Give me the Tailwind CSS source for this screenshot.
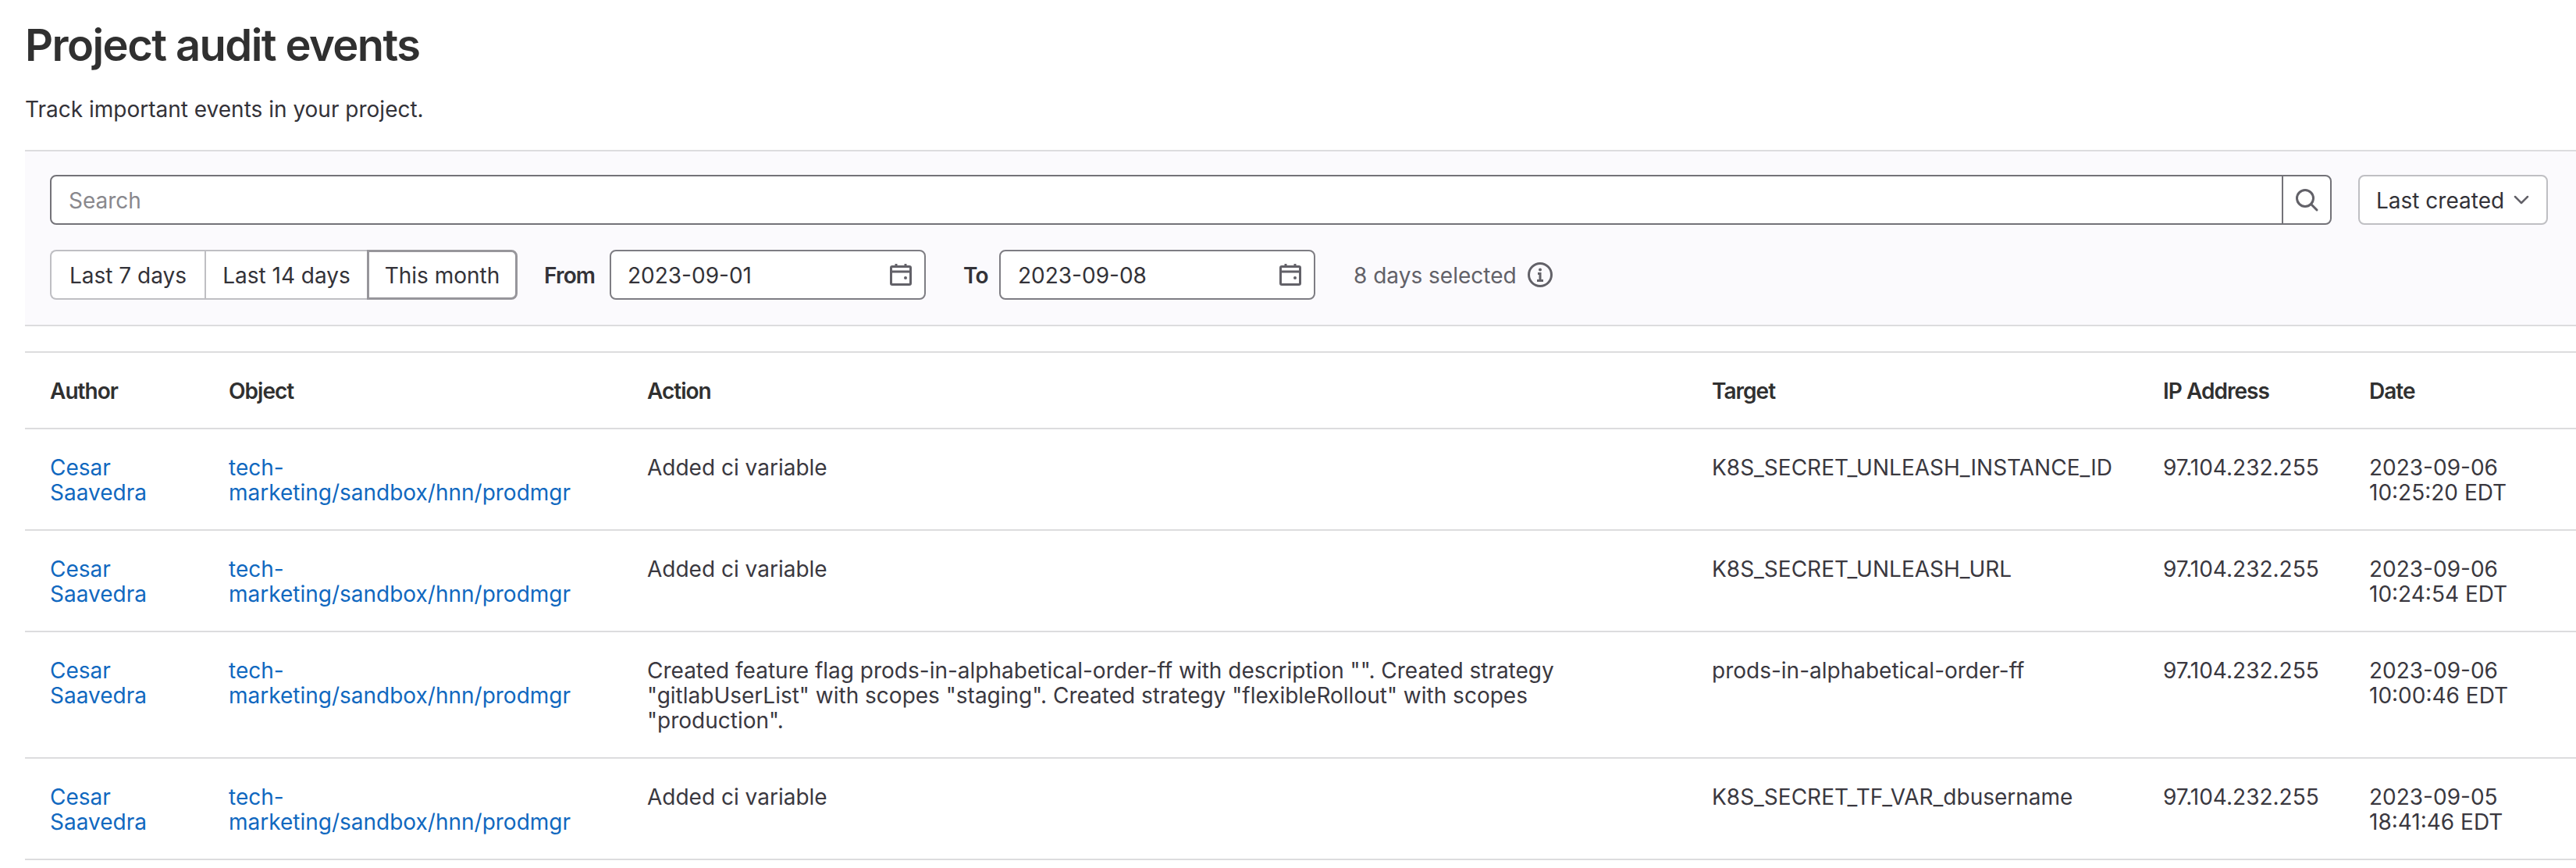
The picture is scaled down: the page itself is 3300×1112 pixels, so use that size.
<!DOCTYPE html>
<html lang="en">
<head>
  <meta charset="UTF-8">
  <title>Project audit events</title>
  <script src="https://cdn.jsdelivr.net/npm/@tailwindcss/browser@4"></script>
</head>
<body class="bg-white text-[#333238] font-['Inter',sans-serif] text-[28px] leading-[32px] overflow-hidden">
  <div class="pl-8">
    <!-- Page heading -->
    <h1 class="pt-[24px] text-[56px] leading-[68px] font-semibold text-[#303030] tracking-[-0.028em]">Project audit events</h1>
    <p class="mt-[32px] text-[#333238]">Track important events in your project.</p>

    <!-- Filter band -->
    <div class="mt-[36px] bg-[#fbfafd] border-y-2 border-[#dcdcde] pt-[30px] pb-[32px] pl-8 pr-[36px] flex flex-col gap-8">
      <div class="flex items-center gap-[34px]">
        <div class="flex-1 flex h-16 bg-white border-2 border-[#737278] rounded-lg">
          <input placeholder="Search" class="flex-1 px-[22px] pt-[2px] outline-none placeholder-[#89888d] rounded-l-lg">
          <button class="w-[62px] border-l-2 border-[#737278] flex items-center justify-center">
            <svg viewBox="0 0 16 16" class="w-8 h-8 text-[#626168]" fill="none" stroke="currentColor" stroke-width="1.5" stroke-linecap="round"><circle cx="7" cy="7" r="5.25"/><path d="M10.9 10.9l3.6 3.6"/></svg>
          </button>
        </div>
        <button class="h-16 w-[243px] bg-white border-2 border-[#bfbfc3] rounded-lg flex items-center pl-[21px]">
          <span class="pt-[2px]">Last created</span>
          <svg viewBox="0 0 16 16" class="w-8 h-8 ml-[6px] text-[#626168]" fill="none" stroke="currentColor" stroke-width="1.25" stroke-linecap="round" stroke-linejoin="round"><path d="M4 6l4 4 4-4"/></svg>
        </button>
      </div>

      <div class="flex items-center">
        <div class="flex h-16">
          <button class="w-[198px] pt-[1px] bg-white border-2 border-r-0 border-[#bfbfc3] rounded-l-lg">Last 7 days</button>
          <button class="w-[210px] pt-[1px] bg-white border-2 border-[#bfbfc3]">Last 14 days</button>
          <button class="w-[193px] pt-[1px] bg-white border-[3px] -ml-[2px] border-[#97969b] rounded-r-lg">This month</button>
        </div>
        <span class="ml-[34px] w-[84px] pt-[1px] font-semibold tracking-[-0.03em]">From</span>
        <div class="w-[405px] h-16 bg-white border-2 border-[#7e7d83] rounded-lg flex items-center justify-between pl-[21px] pr-[14px]">
          <span class="pt-[1px]">2023-09-01</span>
          <svg viewBox="0 0 16 16" class="w-8 h-8 text-[#626168]" fill="none" stroke="currentColor" stroke-width="1.5"><rect x="1.75" y="2.75" width="12.5" height="11.5" rx="0.75"/><path d="M1.75 6h12.5M5 1v2M11 1v2" /><circle cx="11" cy="10" r="1" fill="currentColor" stroke="none"/></svg>
        </div>
        <span class="ml-[48px] w-[46px] pt-[1px] font-semibold tracking-[-0.03em]">To</span>
        <div class="w-[405px] h-16 bg-white border-2 border-[#7e7d83] rounded-lg flex items-center justify-between pl-[22px] pr-[14px]">
          <span class="pt-[1px]">2023-09-08</span>
          <svg viewBox="0 0 16 16" class="w-8 h-8 text-[#626168]" fill="none" stroke="currentColor" stroke-width="1.5"><rect x="1.75" y="2.75" width="12.5" height="11.5" rx="0.75"/><path d="M1.75 6h12.5M5 1v2M11 1v2" /><circle cx="11" cy="10" r="1" fill="currentColor" stroke="none"/></svg>
        </div>
        <span class="ml-[49px] pt-[1px] text-[#626168]">8 days selected</span>
        <svg viewBox="0 0 16 16" class="w-8 h-8 ml-[14px] text-[#626168]" fill="none" stroke="currentColor" stroke-width="1.5"><circle cx="8" cy="8" r="7.25"/><path d="M6.5 7.25H8V11.5M6 11.75h4"/><circle cx="8" cy="4.75" r="1" fill="currentColor" stroke="none"/></svg>
      </div>
    </div>

    <!-- Events table -->
    <table class="mt-[32px] w-full table-fixed border-collapse text-left text-[#3a383f] [&_td]:px-8 [&_td]:pt-[33px] [&_td]:pb-[31px] [&_th]:px-8 [&_th]:pt-[33px] [&_th]:pb-[31px]">
      <colgroup>
        <col class="w-[229px]"><col class="w-[536px]"><col class="w-[1364px]"><col class="w-[578px]"><col class="w-[264px]"><col class="w-[297px]">
      </colgroup>
      <thead class="text-[#303030]">
        <tr class="border-y-2 border-[#dcdcde]">
          <th class="font-semibold tracking-[-0.035em]">Author</th>
          <th class="font-semibold tracking-[-0.035em]">Object</th>
          <th class="font-semibold tracking-[-0.035em]">Action</th>
          <th class="font-semibold tracking-[-0.035em]">Target</th>
          <th class="font-semibold tracking-[-0.035em]">IP Address</th>
          <th class="font-semibold tracking-[-0.035em]">Date</th>
        </tr>
      </thead>
      <tbody>
        <tr class="border-b-2 border-[#dcdcde] align-top">
          <td class="text-[#1068bf]">Cesar Saavedra</td>
          <td class="text-[#1068bf]">tech-marketing/sandbox/hnn/prodmgr</td>
          <td>Added ci variable</td>
          <td>K8S_SECRET_UNLEASH_INSTANCE_ID</td>
          <td>97.104.232.255</td>
          <td>2023-09-06<br>10:25:20 EDT</td>
        </tr>
        <tr class="border-b-2 border-[#dcdcde] align-top">
          <td class="text-[#1068bf]">Cesar Saavedra</td>
          <td class="text-[#1068bf]">tech-marketing/sandbox/hnn/prodmgr</td>
          <td>Added ci variable</td>
          <td>K8S_SECRET_UNLEASH_URL</td>
          <td>97.104.232.255</td>
          <td>2023-09-06<br>10:24:54 EDT</td>
        </tr>
        <tr class="border-b-2 border-[#dcdcde] align-top">
          <td class="text-[#1068bf]">Cesar Saavedra</td>
          <td class="text-[#1068bf]">tech-marketing/sandbox/hnn/prodmgr</td>
          <td>Created feature flag prods-in-alphabetical-order-ff with description "". Created strategy "gitlabUserList" with scopes "staging". Created strategy "flexibleRollout" with scopes "production".</td>
          <td>prods-in-alphabetical-order-ff</td>
          <td>97.104.232.255</td>
          <td>2023-09-06<br>10:00:46 EDT</td>
        </tr>
        <tr class="border-b-2 border-[#dcdcde] align-top">
          <td class="text-[#1068bf]">Cesar Saavedra</td>
          <td class="text-[#1068bf]">tech-marketing/sandbox/hnn/prodmgr</td>
          <td>Added ci variable</td>
          <td>K8S_SECRET_TF_VAR_dbusername</td>
          <td>97.104.232.255</td>
          <td>2023-09-05<br>18:41:46 EDT</td>
        </tr>
      </tbody>
    </table>
  </div>
</body>
</html>
